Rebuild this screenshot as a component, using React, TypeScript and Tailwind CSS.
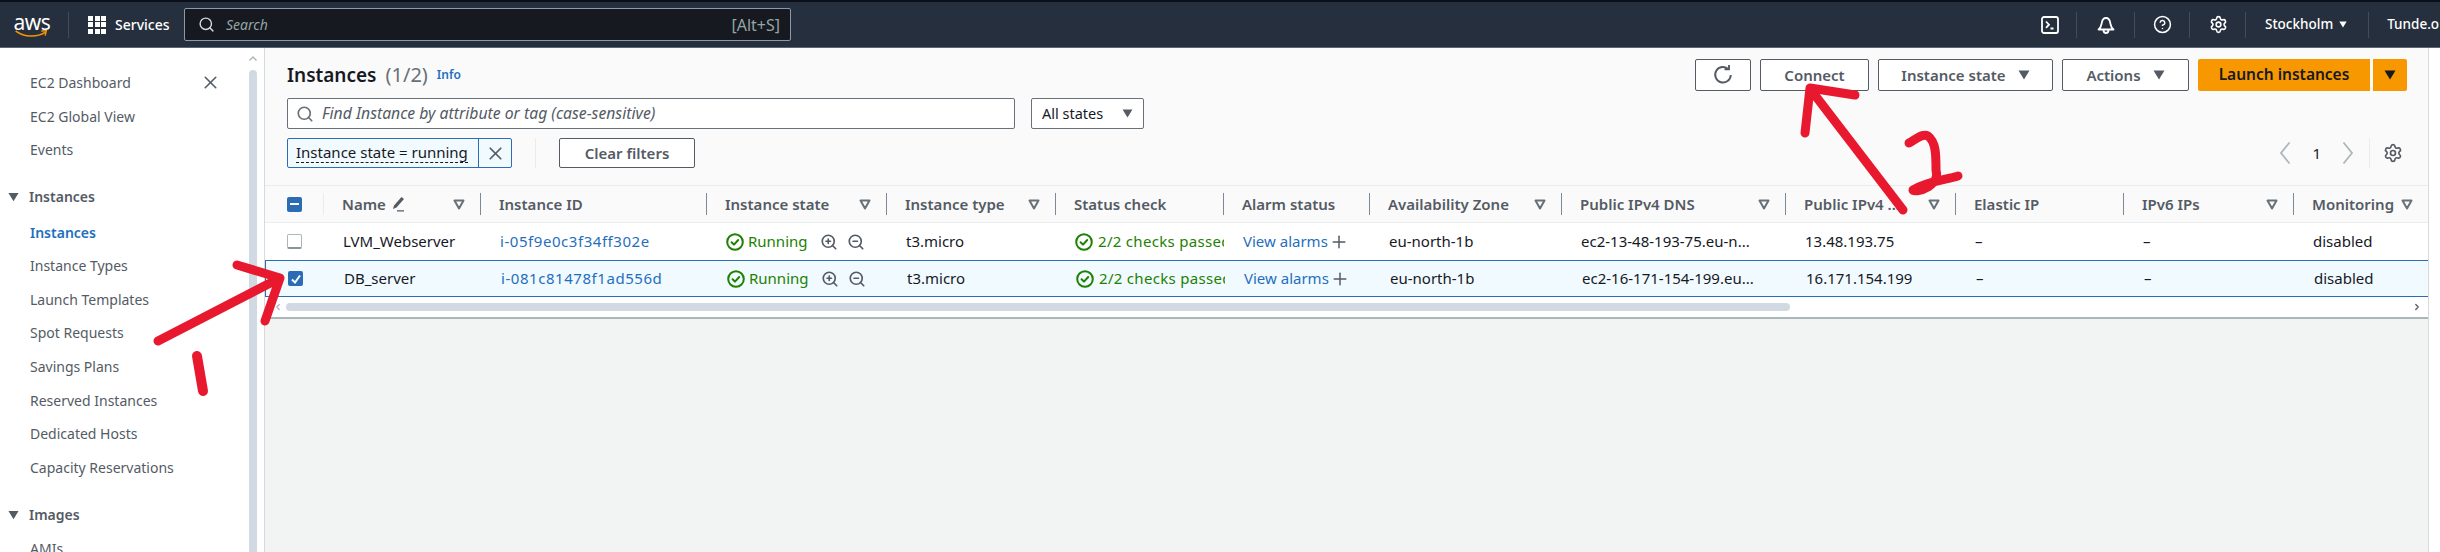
import { CircleHelp, Plus, Search, Settings, X, ZoomIn, ZoomOut, ChevronLeft, ChevronRight } from "lucide-react";

const columns = [
  { label: "Name", w: "w-[157px]", filter: true, pen: true },
  { label: "Instance ID", w: "w-[226px]", filter: false },
  { label: "Instance state", w: "w-[180px]", filter: true },
  { label: "Instance type", w: "w-[169px]", filter: true },
  { label: "Status check", w: "w-[168px]", filter: false },
  { label: "Alarm status", w: "w-[146px]", filter: false },
  { label: "Availability Zone", w: "w-[192px]", filter: true },
  { label: "Public IPv4 DNS", w: "w-[224px]", filter: true },
  { label: "Public IPv4 ...", w: "w-[170px]", filter: true },
  { label: "Elastic IP", w: "w-[168px]", filter: false },
  { label: "IPv6 IPs", w: "w-[170px]", filter: true },
  { label: "Monitoring", w: "w-[134px]", filter: true },
];

const rows = [
  { name: "LVM_Webserver", id: "i-05f9e0c3f34ff302e", dns: "ec2-13-48-193-75.eu-n...", ip: "13.48.193.75", selected: false },
  { name: "DB_server", id: "i-081c81478f1ad556d", dns: "ec2-16-171-154-199.eu...", ip: "16.171.154.199", selected: true },
];

const navTop = ["EC2 Dashboard", "EC2 Global View", "Events"];
const navInstances = ["Instance Types", "Launch Templates", "Spot Requests", "Savings Plans", "Reserved Instances", "Dedicated Hosts", "Capacity Reservations"];

function Caret({ className }: { className: string }) {
  return (
    <svg viewBox="0 0 12 10" className={className} fill="currentColor">
      <path d="M0.5 0.5h11L6 9.5z" />
    </svg>
  );
}

function FilterIcon() {
  return (
    <svg viewBox="0 0 12 11" className="h-[11px] w-[12px] shrink-0 text-[#687078]" fill="none" stroke="currentColor" strokeWidth="2">
      <path d="M1.5 1.5h9L6 9.5z" strokeLinejoin="round" />
    </svg>
  );
}

function StatusOk() {
  return (
    <svg viewBox="0 0 18 18" className="h-[18px] w-[18px] shrink-0 text-[#1d8102]" fill="none" stroke="currentColor" strokeWidth="2">
      <circle cx="9" cy="9" r="7.8" />
      <path d="M5.6 9.2l2.4 2.4 4.2-4.6" strokeLinecap="round" strokeLinejoin="round" />
    </svg>
  );
}

function GearIcon({ className }: { className: string }) {
  return <Settings className={className} strokeWidth={2} />;
}

function NavDivider() {
  return <div className="h-[26px] w-px shrink-0 bg-[#414d5c]" />;
}

function PagerChevron({ dir }: { dir: "left" | "right" }) {
  return (
    <svg viewBox="0 0 12 24" className="h-[24px] w-[12px] shrink-0 text-[#aab7b8]" fill="none" stroke="currentColor" strokeWidth="1.8">
      <path d={dir === "left" ? "M10.5 1.5L2 12l8.5 10.5" : "M1.5 1.5L10 12 1.5 22.5"} />
    </svg>
  );
}

function Button({ label, w, caret }: { label: string; w: string; caret?: boolean }) {
  return (
    <div className={`${w} flex h-[32px] items-center justify-center gap-[12px] rounded-[2px] border border-[#545b64] bg-white text-[15px] font-semibold text-[#545b64]`}>
      {label}
      {caret && <Caret className="h-[10px] w-[12px]" />}
    </div>
  );
}

function TopBar() {
  return (
    <div className="flex h-[48px] items-center border-b border-[#5b6675] border-t-[2px] border-t-[#0b0f1a] bg-[#252f3e] text-white">
      <div className="relative flex h-[26px] w-[68px] shrink-0 flex-col items-center pr-[4px]">
        <span className="text-[21px] leading-[20px] tracking-[-0.5px]">aws</span>
        <svg viewBox="0 0 36 10" className="absolute top-[18px] left-[14px] h-[9px] w-[35px]" fill="none">
          <path d="M1 1.5c9 6.5 23 7 32 1.2" stroke="#f79400" strokeWidth="1.8" strokeLinecap="round" />
          <path d="M29.5 1.2l5-.6-1.2 5" stroke="#f79400" strokeWidth="1.6" strokeLinecap="round" />
        </svg>
      </div>
      <NavDivider />
      <div className="ml-[19px] grid w-[18px] shrink-0 grid-cols-3 gap-[1.5px]">
        {Array.from({ length: 9 }).map((_, i) => (
          <div key={i} className="h-[5px] w-[5px] bg-white" />
        ))}
      </div>
      <span className="ml-[9px] w-[69px] shrink-0 text-[14px] font-medium">Services</span>
      <div className="flex h-[33px] w-[607px] shrink-0 items-center rounded-[2px] border border-[#8d99a8] bg-[#16191f] pr-[10px] pl-[13px] text-[#95a5a6]">
        <Search className="h-[17px] w-[17px] text-[#d5dbdb]" strokeWidth={2} />
        <span className="ml-[11px] flex-1 text-[14px] italic">Search</span>
        <span className="text-[16px]">[Alt+S]</span>
      </div>
      <div className="ml-[1250px] flex h-full shrink-0 items-center">
        <svg viewBox="0 0 18 18" className="h-[18px] w-[18px]" fill="none" stroke="white" strokeWidth="1.8">
          <rect x="1" y="1" width="16" height="16" rx="2" />
          <path d="M5 5.5l3 3.2-3 3.2M9.5 12.5h3" />
        </svg>
        <div className="ml-[17px]"><NavDivider /></div>
        <svg viewBox="0 0 18 18" className="ml-[20px] h-[18px] w-[18px]" fill="none" stroke="white" strokeWidth="1.8">
          <path d="M1.5 13.5h15c-2.6-2-2.6-3.4-3.2-6.4C12.8 4 11.4 2 9 2S5.2 4 4.7 7.1C4.1 10.1 4.1 11.5 1.5 13.5zM6.5 14c0 4 5 4 5 0" strokeLinejoin="round" />
        </svg>
        <div className="ml-[19px]"><NavDivider /></div>
        <CircleHelp className="ml-[18px] h-[19px] w-[19px]" strokeWidth={1.9} />
        <div className="ml-[17px]"><NavDivider /></div>
        <GearIcon className="ml-[19px] h-[19px] w-[19px]" />
        <div className="ml-[17px]"><NavDivider /></div>
        <span className="ml-[19px] text-[13.5px] font-medium">Stockholm</span>
        <Caret className="ml-[6px] h-[7px] w-[8px]" />
        <div className="ml-[21px]"><NavDivider /></div>
        <span className="ml-[18px] text-[13.5px] font-medium whitespace-nowrap">Tunde.o</span>
      </div>
    </div>
  );
}

function Sidebar() {
  return (
    <div className="relative flex w-[264px] shrink-0 bg-white">
      <div className="w-[249px] pt-[18px] text-[14px] text-[#545b64]">
        {navTop.map((t) => (
          <div key={t} className="flex h-[33.6px] items-center pl-[30px]">{t}</div>
        ))}
        <div className="mt-[13px] flex h-[33.6px] items-center pl-[8px] font-semibold">
          <Caret className="h-[10px] w-[11px]" />
          <span className="ml-[10px]">Instances</span>
        </div>
        <div className="mt-[2px] flex h-[33.6px] items-center pl-[30px] font-semibold text-[#1f6fbd]">Instances</div>
        {navInstances.map((t) => (
          <div key={t} className="flex h-[33.6px] items-center pl-[30px]">{t}</div>
        ))}
        <div className="mt-[14px] flex h-[33.6px] items-center pl-[8px] font-semibold">
          <Caret className="h-[10px] w-[11px]" />
          <span className="ml-[10px]">Images</span>
        </div>
        <div className="flex h-[33.6px] items-center pl-[30px]">AMIs</div>
      </div>
      <X className="absolute top-[24px] left-[200px] h-[21px] w-[21px] text-[#545b64]" strokeWidth={1.8} />
      <div className="flex w-[8px] shrink-0 flex-col items-center">
        <svg viewBox="0 0 8 5" className="mt-[8px] h-[5px] w-[8px] text-[#aab7b8]" fill="none" stroke="currentColor" strokeWidth="1.4">
          <path d="M0.5 4.5L4 1l3.5 3.5" />
        </svg>
        <div className="mt-[9px] w-full flex-1 rounded-t-[4px] bg-[#d1dae3]" />
      </div>
    </div>
  );
}

function PageHeader() {
  return (
    <div className="bg-[#fafafa] pt-[11px] pr-[21px] pl-[22px]">
      <div className="flex h-[32px] items-center">
        <span className="text-[19px] font-semibold text-[#16191f]">Instances</span>
        <span className="ml-[9px] text-[20px] text-[#687078]">(1/2)</span>
        <span className="ml-[9px] text-[12px] font-semibold text-[#1f6fbd]">Info</span>
        <div className="ml-auto flex gap-[9px]">
          <div className="flex h-[32px] w-[56px] items-center justify-center rounded-[2px] border border-[#545b64] bg-white text-[#545b64]">
            <svg viewBox="0 0 20 20" className="h-[20px] w-[20px]" fill="none" stroke="currentColor" strokeWidth="1.9">
              <path d="M15.5 4.2A7.8 7.8 0 1 0 17.8 10M11.5 4.2h4.5V0" />
            </svg>
          </div>
          <Button label="Connect" w="w-[109px]" />
          <Button label="Instance state" w="w-[175px]" caret />
          <Button label="Actions" w="w-[127px]" caret />
          <div className="flex gap-[3px]">
            <div className="flex h-[32px] w-[172px] items-center justify-center rounded-l-[2px] bg-[#f79800] text-[15.5px] font-semibold text-[#16191f]">Launch instances</div>
            <div className="flex h-[32px] w-[34px] items-center justify-center rounded-r-[2px] bg-[#f79800] text-[#16191f]">
              <Caret className="h-[10px] w-[12px]" />
            </div>
          </div>
        </div>
      </div>
      <div className="mt-[7px] flex">
        <div className="flex h-[31px] w-[728px] items-center rounded-[2px] border border-[#687078] bg-white pl-[8px]">
          <Search className="h-[18px] w-[18px] text-[#687078]" strokeWidth={2.2} />
          <span className="ml-[8px] text-[15.75px] text-[#545b64] italic">Find Instance by attribute or tag (case-sensitive)</span>
        </div>
        <div className="ml-[16px] flex h-[31px] w-[113px] items-center justify-between rounded-[2px] border border-[#687078] bg-white pr-[10px] pl-[10px] text-[14.5px] text-[#16191f]">
          All states
          <Caret className="h-[9px] w-[11px] text-[#545b64]" />
        </div>
      </div>
      <div className="mt-[9px] flex h-[30px] items-center">
        <div className="flex h-[30px] w-[225px] items-stretch rounded-[2px] border border-[#2a6db5] bg-[#f1faff]">
          <div className="flex flex-1 items-center pl-[8px]">
            <span className="border-b border-dashed border-[#16191f] text-[15px] leading-[19px] whitespace-nowrap text-[#16191f]">Instance state = running</span>
          </div>
          <div className="flex w-[33px] items-center justify-center border-l border-[#2a6db5]">
            <X className="h-[21px] w-[21px] text-[#545b64]" strokeWidth={2} />
          </div>
        </div>
        <div className="ml-[23px] h-[30px] w-px bg-[#eaeded]" />
        <div className="ml-[23px] flex h-[30px] w-[136px] items-center justify-center rounded-[2px] border border-[#545b64] bg-white text-[15px] font-semibold text-[#545b64]">Clear filters</div>
        <div className="ml-auto flex items-center text-[#16191f]">
          <PagerChevron dir="left" />
          <span className="ml-[21px] text-[15px]">1</span>
          <div className="ml-[21px]"><PagerChevron dir="right" /></div>
          <div className="ml-[15px] h-[30px] w-px bg-[#eaeded]" />
          <GearIcon className="mr-[4px] ml-[13px] h-[20px] w-[20px] text-[#545b64]" />
        </div>
      </div>
    </div>
  );
}

function CheckBox({ state }: { state: "none" | "checked" | "mixed" }) {
  if (state === "none") return <div className="h-[15px] w-[15px] rounded-[2px] border border-[#aab7b8] border-b-[2px] border-b-[#879596] bg-white" />;
  return (
    <div className="flex h-[15px] w-[15px] items-center justify-center rounded-[2px] bg-[#2a6db5]">
      {state === "mixed" ? (
        <div className="h-[2px] w-[9px] bg-white" />
      ) : (
        <svg viewBox="0 0 12 12" className="h-[12px] w-[12px]" fill="none" stroke="white" strokeWidth="2">
          <path d="M2 6.5l3 3 5-7" />
        </svg>
      )}
    </div>
  );
}

function HeaderRow() {
  return (
    <div className="flex h-[38px] items-center border-y border-[#eaeded] bg-[#fafafa]">
      <div className="flex h-[22px] w-[59px] shrink-0 items-center border-r border-[#eaeded] pl-[22px]">
        <CheckBox state="mixed" />
      </div>
      {columns.map((c) => (
        <div key={c.label} className={`${c.w} flex h-[22px] shrink-0 items-center justify-between border-r border-[#7d8998] pr-[15px] pl-[18px] text-[15px] font-semibold whitespace-nowrap text-[#545b64] last:border-r-0`}>
          <span className="flex items-center gap-[4px]">
            {c.label}
            {c.pen && (
              <svg viewBox="0 0 16 16" className="h-[16px] w-[16px]" fill="currentColor">
                <path d="M11.5 1l2.5 2-7.5 8.5-3.5 1.5 1-3.5zM7 14.2h7v1.3H7z" />
              </svg>
            )}
          </span>
          {c.filter && <FilterIcon />}
        </div>
      ))}
    </div>
  );
}

function DataRow({ row }: { row: (typeof rows)[number] }) {
  const cell = "flex shrink-0 items-center overflow-hidden pl-[19px] whitespace-nowrap";
  return (
    <div className={`flex h-[37px] items-center text-[15px] text-[#16191f] ${row.selected ? "border-y border-l border-[#2a6db5] bg-[#f1faff]" : "bg-white"}`}>
      <div className="flex w-[59px] shrink-0 pl-[22px]">
        <CheckBox state={row.selected ? "checked" : "none"} />
      </div>
      <div className={`${cell} w-[157px]`}>{row.name}</div>
      <div className={`${cell} w-[226px] tracking-[0.55px] text-[#1f6fbd]`}>{row.id}</div>
      <div className={`${cell} w-[180px] text-[#1d8102]`}>
        <StatusOk />
        <span className="ml-[4px]">Running</span>
        <ZoomIn className="ml-[12px] h-[18px] w-[18px] text-[#545b64]" strokeWidth={2.2} />
        <ZoomOut className="ml-[9px] h-[18px] w-[18px] text-[#545b64]" strokeWidth={2.2} />
      </div>
      <div className={`${cell} w-[169px]`}>t3.micro</div>
      <div className={`${cell} w-[168px] tracking-[0.3px] text-[#1d8102]`}>
        <StatusOk />
        <span className="ml-[5px]">2/2 checks passed</span>
      </div>
      <div className={`${cell} w-[146px] text-[#1f6fbd]`}>
        View alarms
        <Plus className="ml-[1px] h-[20px] w-[20px] text-[#545b64]" strokeWidth={1.8} />
      </div>
      <div className={`${cell} w-[192px]`}>eu-north-1b</div>
      <div className={`${cell} w-[224px]`}>{row.dns}</div>
      <div className={`${cell} w-[170px]`}>{row.ip}</div>
      <div className={`${cell} w-[168px]`}>–</div>
      <div className={`${cell} w-[170px]`}>–</div>
      <div className={`${cell} w-[134px]`}>disabled</div>
    </div>
  );
}

function Annotations() {
  return (
    <svg viewBox="0 0 2440 552" className="pointer-events-none absolute top-0 left-0 h-[552px] w-[2440px]" fill="none" stroke="#e8192f" strokeLinecap="round" strokeLinejoin="round">
      <g strokeWidth="9">
        <path d="M158 341L280 278M237 265L280 278L265 321" />
        <path d="M197 356L203 391" strokeWidth="10" />
        <path d="M1903 210L1811 90M1805 133L1810 88L1855 95" />
        <path d="M1909 143C1915 140 1922 133 1928 136C1936 142 1936 155 1936 170C1938 178 1935 182 1928 187C1920 192 1913 191 1913 190C1925 182 1945 180 1958 176" />
      </g>
    </svg>
  );
}

export default function App() {
  return (
    <div className="relative h-[552px] w-[2440px] overflow-hidden bg-white font-['Noto_Sans',sans-serif]">
      <TopBar />
      <div className="flex h-[504px]">
        <Sidebar />
        <div className="flex w-[2165px] shrink-0 flex-col border-x border-[#d5dbdb] bg-[#f2f3f3]">
          <PageHeader />
          <div className="bg-[#fafafa] pt-[17px]">
            <div className="overflow-hidden">
              <div className="w-[2200px]">
                <HeaderRow />
                {rows.map((r) => (
                  <DataRow key={r.id} row={r} />
                ))}
              </div>
            </div>
            <div className="flex h-[22px] items-center border-b-2 border-[#aab7b8] bg-white">
              <ChevronLeft className="ml-[8px] h-[10px] w-[10px] text-[#aab7b8]" strokeWidth={3} />
              <div className="ml-[3px] h-[8px] w-[1504px] rounded-[4px] bg-[#d1dae3]" />
              <ChevronRight className="ml-[622px] h-[10px] w-[10px] text-[#545b64]" strokeWidth={3} />
            </div>
          </div>
        </div>
      </div>
      <Annotations />
    </div>
  );
}
